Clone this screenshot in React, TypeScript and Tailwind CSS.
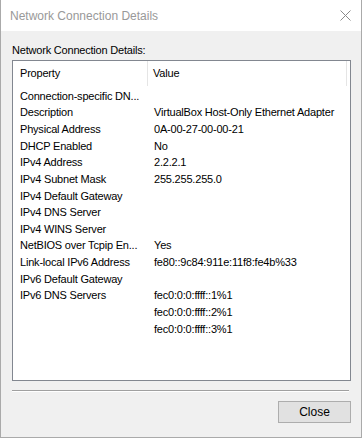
import React from "react";

const rows: [string, string][] = [
  ["Connection-specific DN...", ""],
  ["Description", "VirtualBox Host-Only Ethernet Adapter"],
  ["Physical Address", "0A-00-27-00-00-21"],
  ["DHCP Enabled", "No"],
  ["IPv4 Address", "2.2.2.1"],
  ["IPv4 Subnet Mask", "255.255.255.0"],
  ["IPv4 Default Gateway", ""],
  ["IPv4 DNS Server", ""],
  ["IPv4 WINS Server", ""],
  ["NetBIOS over Tcpip En...", "Yes"],
  ["Link-local IPv6 Address", "fe80::9c84:911e:11f8:fe4b%33"],
  ["IPv6 Default Gateway", ""],
  ["IPv6 DNS Servers", "fec0:0:0:ffff::1%1"],
  ["", "fec0:0:0:ffff::2%1"],
  ["", "fec0:0:0:ffff::3%1"],
];

export default function App() {
  return (
    <div className="flex h-[438px] w-[362px] flex-col border-x border-b border-[#aaaaaa] bg-[#f0f0f0] font-['Liberation_Sans',Arial,sans-serif] text-[11px] tracking-[-0.2px] text-black">
      {/* Title bar */}
      <div className="flex h-[31px] shrink-0 items-center justify-between bg-white pl-[9px] pr-[10px]">
        <span className="text-[12px] tracking-normal text-[#999999]">Network Connection Details</span>
        <svg width="11" height="11" viewBox="0 0 11 11" stroke="#8a8a8a" strokeWidth="1">
          <line x1="0.5" y1="0.5" x2="10.5" y2="10.5" />
          <line x1="10.5" y1="0.5" x2="0.5" y2="10.5" />
        </svg>
      </div>

      <div className="flex flex-1 flex-col pl-[11px] pr-[10px]">
        <div className="mt-[12px] leading-[15px]">Network Connection Details:</div>

        {/* List view */}
        <div className="mt-[2px] flex h-[321px] w-[339px] flex-col border border-[#828790] bg-white">
          <div className="flex h-[25px] shrink-0 items-center">
            <div className="flex h-full w-[135px] shrink-0 items-center border-r border-[#e5e5e5] pl-[7px]">Property</div>
            <div className="flex h-full w-[199px] shrink-0 items-center border-r border-[#e5e5e5] pl-[5px]">Value</div>
          </div>
          <div className="flex flex-col pt-[2px]">
            {rows.map(([k, v], i) => (
              <div key={i} className="flex h-[16.64px] items-center leading-[15px]">
                <div className="w-[135px] shrink-0 overflow-hidden whitespace-nowrap pl-[7px]">{k}</div>
                <div className="whitespace-nowrap pl-[6px]">{v}</div>
              </div>
            ))}
          </div>
        </div>

        {/* Separator */}
        <div className="mt-[9px] w-[337px] border-t border-[#a0a0a0] border-b border-b-white" />

        <div className="mt-[9px] flex justify-end">
          <button className="h-[22px] w-[73px] border border-[#adadad] bg-[#e1e1e1] text-[12px] leading-none tracking-normal">
            Close
          </button>
        </div>
      </div>
    </div>
  );
}
